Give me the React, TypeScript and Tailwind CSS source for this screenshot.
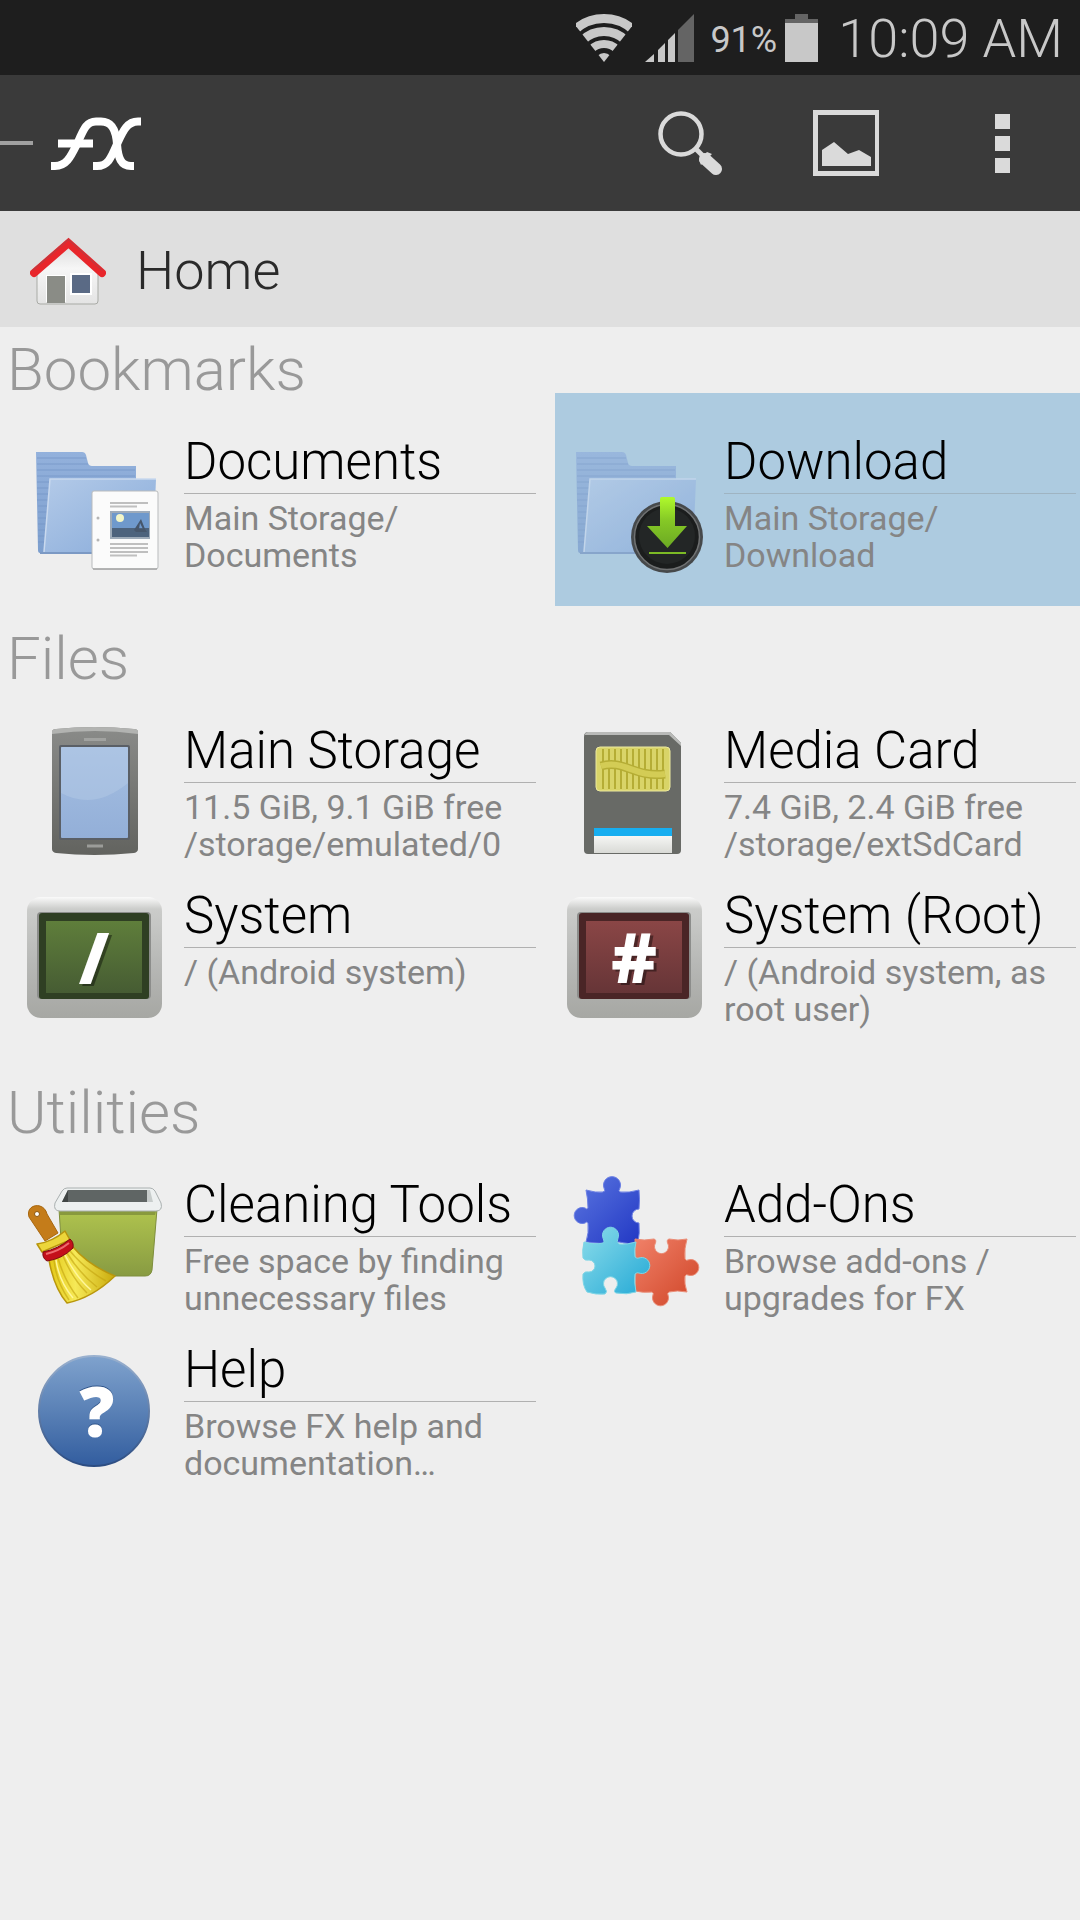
import React from "react";

interface ITile {
    title: string;
    lines: string[];
    icon: React.ReactNode;
    selected?: boolean;
}

interface ISection {
    heading: string;
    tiles: ITile[];
}

const WifiIcon = () => (
    <svg viewBox="0 0 56 48" className="h-12 w-14">
        <clipPath id="wifiFan"><path d="M28 48L-1 11V-2H57V11Z" /></clipPath>
        <g clipPath="url(#wifiFan)" fill="none" stroke="#c8c8c8">
            <circle cx="28" cy="48" r="43.5" strokeWidth="9" />
            <circle cx="28" cy="48" r="30.5" strokeWidth="9" />
            <circle cx="28" cy="48" r="18" strokeWidth="8" />
            <circle cx="28" cy="48" r="9" fill="#c8c8c8" stroke="none" />
        </g>
    </svg>
);

const SignalIcon = () => (
    <svg viewBox="0 0 49 48" className="ml-[13px] h-12 w-[49px]">
        <path d="M0 48L9 40V48ZM13 48V36L20 29V48ZM23 48V26L30 19V48Z" fill="#c8c8c8" />
        <path d="M33 48V16L49 0V48Z" fill="#646464" />
    </svg>
);

const BatteryIcon = () => (
    <svg viewBox="0 0 33 48" className="ml-2 h-12 w-[33px]">
        <path d="M10 0H23V5H33V9H0V5H10Z" fill="#646464" />
        <path d="M0 9H33V48H0Z" fill="#c8c8c8" />
    </svg>
);

const FxLogo = () => (
    <svg viewBox="0 0 90 53" className="ml-[18px] h-[53px] w-[90px]" fill="none" stroke="#fff" strokeWidth="8">
        <path d="M0 49H4C16 49 20 39 27 25C33 11 36 4.500 45 4.500H50C61 4.500 65 13 66 27C67 41 70 49 80 49H83" />
        <path d="M90 4.500H87C76 4.500 72 14 66 27C60 41 57 49 46 49H42" />
        <path d="M7 26.500H42" />
    </svg>
);

const SearchIcon = () => (
    <svg viewBox="0 0 64 64" className="size-16">
        <circle cx="23" cy="23" r="20.500" fill="none" stroke="#dadada" strokeWidth="4.500" />
        <path d="M37 37L45 45" stroke="#dadada" strokeWidth="5" />
        <path d="M47 48L58 58" stroke="#dadada" strokeWidth="12" strokeLinecap="round" />
        <path d="M41 49L49 41L54 43L43 54Z" fill="#dadada" />
    </svg>
);

const PictureIcon = () => (
    <svg viewBox="0 0 66 66" className="size-[66px]" fill="#dadada">
        <path d="M0 0H66V66H0ZM5 5V61H62V5Z" fillRule="evenodd" />
        <path d="M9 40L21 32L35 44L46 40L58 47V56H9Z" />
    </svg>
);

const MoreIcon = () => (
    <svg viewBox="0 0 15 59" className="h-[59px] w-[15px]" fill="#dadada">
        <path d="M0 0H15V15H0ZM0 22H15V37H0ZM0 44H15V59H0Z" />
    </svg>
);

const HomeIcon = () => (
    <svg viewBox="0 0 76 68" className="h-[68px] w-[76px]">
        <defs>
            <linearGradient id="wall" x1="0" y1="0" x2="0" y2="1">
                <stop offset="0" stopColor="#dcdcdc" /><stop offset=".4" stopColor="#f6f6f6" /><stop offset="1" stopColor="#e4e4e4" />
            </linearGradient>
        </defs>
        <path d="M38 8L68 34V64Q68 67 65 67H10Q7 67 7 64V34Z" fill="url(#wall)" stroke="#a9aba6" strokeWidth="1" />
        <rect x="16" y="38" width="20" height="27" fill="#fff" />
        <rect x="17" y="39" width="18" height="27" fill="#8a8c86" />
        <rect x="40" y="36" width="22" height="22" fill="#fff" />
        <rect x="42" y="38" width="18" height="18" fill="#5a6a85" />
        <path d="M4 36L38.500 6L72 36" fill="none" stroke="#e8262b" strokeWidth="8" strokeLinecap="round" />
        <path d="M3 33L38.500 2.500L72 33" fill="none" stroke="#c4373d" strokeWidth="1.500" strokeLinecap="round" />
    </svg>
);

const IconBox = ({ children }: { children: React.ReactNode }) => (
    <svg viewBox="0 0 144 144" className="mt-[37px] ml-[7px] size-36 shrink-0">{children}</svg>
);

const Folder = ({ id }: { id: string }) => (
    <>
        <defs>
            <linearGradient id={id + "Back"} x1="0" y1="0" x2="0" y2="1">
                <stop offset="0" stopColor="#93b1dc" /><stop offset="1" stopColor="#7d9fce" />
            </linearGradient>
            <linearGradient id={id + "Front"} x1="0" y1="0" x2="1" y2="1">
                <stop offset="0" stopColor="#b3cae8" /><stop offset="1" stopColor="#88abda" />
            </linearGradient>
        </defs>
        <path d="M14 22H60Q63 22 64 25L66 33Q67 36 70 36H114V123H18Q16 123 16 120Z" fill={"url(#" + id + "Back)"} />
        <path d="M15 28H64M15 34H66M15 40H113M15 46H113M15 52H27M15 58H27M15 64H27M15 70H26M16 76H26M16 82H25M16 88H25M16 94H25M16 100H24M16 106H24M16 112H23" stroke="#7697c8" strokeWidth="2" opacity=".4" />
        <path d="M28 49H134L131 122H22Z" fill={"url(#" + id + "Front)"} />
        <path d="M22 122L28 49H134" fill="none" stroke="#c9d9ee" strokeWidth="1.500" />
        <path d="M18 123H131" stroke="#7b99c4" strokeWidth="2" />
    </>
);

const DocumentsIcon = () => (
    <IconBox>
        <Folder id="docs" />
        <rect x="70" y="61" width="66" height="78" rx="2" fill="#fbfbfb" stroke="#b9bbbd" strokeWidth="1" />
        <path d="M71 139H135" stroke="#8c8c8c" strokeWidth="1" />
        <path d="M88 73H126M88 76.500H115M88 114H126M88 118H126M88 122H126M88 125.500H115" stroke="#bfbfbf" strokeWidth="2" />
        <rect x="88" y="81" width="40" height="28" fill="#9eabb9" />
        <rect x="90" y="83" width="37" height="24" fill="#6f99cc" />
        <rect x="90" y="98" width="37" height="9" fill="#4d637d" />
        <circle cx="98" cy="88" r="4" fill="#f3f6c8" />
        <path d="M112 100L119 89L123 99L125 102H114ZM118 93L117 99H121Z" fill="#46566b" fillRule="evenodd" />
        <circle cx="76" cy="88" r="1.500" fill="#b5b5b5" />
        <circle cx="76" cy="110" r="1.500" fill="#b5b5b5" />
    </IconBox>
);

const DownloadIcon = () => (
    <IconBox>
        <defs>
            <linearGradient id="arrow" x1="0" y1="0" x2="0" y2="1">
                <stop offset="0" stopColor="#b0fa2c" /><stop offset=".45" stopColor="#86c926" /><stop offset="1" stopColor="#6ba823" />
            </linearGradient>
        </defs>
        <g opacity=".75"><Folder id="down" /></g>
        <circle cx="105" cy="107" r="36" fill="#46494b" />
        <circle cx="105" cy="107" r="32.500" fill="#1b1d1d" stroke="#707273" strokeWidth="1.500" />
        <circle cx="105" cy="106" r="28" fill="#232626" />
        <path d="M98 69Q98 67 100 67H111Q113 67 113 69V96H125L105.500 118L85 96H98Z" fill="url(#arrow)" />
        <path d="M87 123H124" stroke="#7cba25" strokeWidth="2" />
    </IconBox>
);

const PhoneIcon = () => (
    <IconBox>
        <defs>
            <linearGradient id="phoneBody" x1="0" y1="0" x2="0" y2="1">
                <stop offset="0" stopColor="#8a8b89" /><stop offset="1" stopColor="#62635f" />
            </linearGradient>
            <linearGradient id="phoneScreen" x1="0" y1="0" x2="0" y2="1">
                <stop offset="0" stopColor="#a5bfe2" /><stop offset="1" stopColor="#93afd8" />
            </linearGradient>
        </defs>
        <path d="M30 13Q30 10 34 10Q72 6 112 10Q116 10 116 13V130Q116 133 112 134Q72 138 34 134Q30 133 30 130Z" fill="url(#phoneBody)" />
        <path d="M30 15V13Q30 10 34 10Q72 6 112 10Q116 10 116 13V15Q73 9 30 15Z" fill="#b2b3b1" />
        <rect x="37" y="26" width="71" height="95" rx="2" fill="#5a5f66" />
        <rect x="39" y="28" width="67" height="91" rx="1" fill="url(#phoneScreen)" />
        <path d="M39 74Q72 92 106 64V28H39Z" fill="#b4c9e6" opacity=".5" />
        <path d="M62 20.500H84" stroke="#a1a2a0" strokeWidth="3" />
        <path d="M65 127H81" stroke="#9b9c99" strokeWidth="3" />
    </IconBox>
);

const CardIcon = () => (
    <IconBox>
        <defs>
            <linearGradient id="label" x1="0" y1="0" x2="0" y2="1">
                <stop offset="0" stopColor="#f5f6f4" /><stop offset="1" stopColor="#d9dad6" />
            </linearGradient>
        </defs>
        <path d="M22 18Q22 13 26 13H108L119 24V131Q119 135 115 135H26Q22 135 22 131Z" fill="#686a66" />
        <path d="M23 16Q23 13 26 13H108L119 24V27L107 16Z" fill="#b9bab8" />
        <rect x="34" y="28" width="74" height="44" rx="4" fill="#d9d468" stroke="#ece9a0" strokeWidth="1" />
        <path d="M41 30V70M47 30V70M53 30V70M59 30V70M65 30V70M71 30V70M77 30V70M83 30V70M89 30V70M95 30V70M101 30V70" stroke="#b5ad35" strokeWidth="2" />
        <path d="M39 47C62 40 72 59 103 55" fill="none" stroke="#b5ad35" strokeWidth="9" />
        <path d="M39 47C62 40 72 59 103 55" fill="none" stroke="#d3cc55" strokeWidth="6" />
        <rect x="32" y="109" width="78" height="8" fill="#17aef0" />
        <rect x="32" y="117" width="78" height="17" fill="url(#label)" />
    </IconBox>
);

interface IMonitorProps {
    id: string;
    sign: string;
    top: string;
    bottom: string;
    frame: string;
}

const MonitorIcon = ({ id, sign, top, bottom, frame }: IMonitorProps) => (
    <IconBox>
        <defs>
            <linearGradient id={id + "Case"} x1="0" y1="0" x2="0" y2="1">
                <stop offset="0" stopColor="#fafafa" /><stop offset=".1" stopColor="#cbccca" /><stop offset=".5" stopColor="#b9bab8" /><stop offset="1" stopColor="#a6a7a3" />
            </linearGradient>
            <linearGradient id={id + "Screen"} x1="0" y1="0" x2="0" y2="1">
                <stop offset="0" stopColor={top} /><stop offset="1" stopColor={bottom} />
            </linearGradient>
        </defs>
        <rect x="5" y="13" width="135" height="121" rx="14" fill={"url(#" + id + "Case)"} />
        <rect x="15" y="28" width="114" height="87" rx="4" fill="#8c8d8b" />
        <rect x="17" y="29" width="110" height="86" rx="3" fill={frame} />
        <rect x="24" y="37" width="96" height="72" fill={"url(#" + id + "Screen)"} />
        <text x="75" y="101" textAnchor="middle" fontSize="69" fontWeight="800" fill="#000" opacity=".4" className="font-['Open_Sans',sans-serif]" aria-hidden="true">{sign}</text>
        <text x="72" y="99" textAnchor="middle" fontSize="69" fontWeight="800" fill="#fff" className="font-['Open_Sans',sans-serif]">{sign}</text>
    </IconBox>
);

const CleaningIcon = () => (
    <IconBox>
        <defs>
            <linearGradient id="bin" x1="0" y1="0" x2="0" y2="1">
                <stop offset="0" stopColor="#b0c44e" /><stop offset="1" stopColor="#889b42" />
            </linearGradient>
            <linearGradient id="bristles" x1="0" y1="0" x2="1" y2="0">
                <stop offset="0" stopColor="#e3c816" /><stop offset=".4" stopColor="#f6e957" /><stop offset="1" stopColor="#c9aa0c" />
            </linearGradient>
        </defs>
        <path d="M37 36H135L130 97Q129 103 123 103H48Q42 103 41 97Z" fill="url(#bin)" stroke="#7e8e3c" strokeWidth="1" />
        <path d="M38 38H134L133 42H38Z" fill="#6f7e34" opacity=".6" />
        <path d="M45 15H128Q131 15 133 18L139 30Q141 38 134 38H38Q31 38 33 30L40 18Q42 15 45 15Z" fill="#edf0f0" stroke="#aab0b0" strokeWidth="1" />
        <path d="M46 17H125V29H40Z" fill="#5f6564" />
        <path d="M46 17L40 29H46Z" fill="#404544" />
        <path d="M125 17H128L131 29H125Z" fill="#c7cccb" />
        <path d="M7 44C3 31 22 28 25 41L36 60L23 68Z" fill="#c47c1a" stroke="#a8670f" strokeWidth="1" />
        <circle cx="15" cy="41" r="2.500" fill="#fff" stroke="#8b560f" strokeWidth="1" />
        <path d="M15 71Q30 69 43 58L48 67L20 79Z" fill="#ecd63a" stroke="#b8950d" strokeWidth="1.500" strokeLinejoin="round" />
        <path d="M27 87L51 74Q66 92 93 103Q70 125 45 130Q32 115 27 87Z" fill="url(#bristles)" stroke="#b9970d" strokeWidth="1.500" strokeLinejoin="round" />
        <path d="M32 87Q34 108 47 127M36 85Q42 107 56 125M41 83Q50 105 65 120M45 80Q58 101 75 114M48 78Q64 97 84 108" fill="none" stroke="#c3a40f" strokeWidth="1.500" opacity=".6" />
        <path d="M34 87Q37 108 51 125M43 82Q54 104 69 117" fill="none" stroke="#fff69a" strokeWidth="1.500" />
        <path d="M21 79Q36 76 48 66Q52 69 51 75Q40 86 25 88Q20 85 21 79Z" fill="#c4101b" stroke="#7f0b12" strokeWidth="1" />
        <path d="M24 81Q37 78 47 70" fill="none" stroke="#ee6a6e" strokeWidth="2" />
    </IconBox>
);

const PuzzleIcon = () => (
    <IconBox>
        <defs>
            <linearGradient id="pieceBlue" x1="0" y1="0" x2="1" y2="1">
                <stop offset="0" stopColor="#5b76e0" /><stop offset="1" stopColor="#2238c4" />
            </linearGradient>
            <linearGradient id="pieceCyan" x1="0" y1="0" x2="1" y2="1">
                <stop offset="0" stopColor="#8bdcea" /><stop offset="1" stopColor="#24a9d6" />
            </linearGradient>
            <linearGradient id="pieceRed" x1="0" y1="0" x2="1" y2="1">
                <stop offset="0" stopColor="#f08068" /><stop offset="1" stopColor="#cf4426" />
            </linearGradient>
        </defs>
        <path d="M24 17Q34 20 41 19Q44 18 42 15A8.500 8.500 0 1 1 58 15Q56 18 58 19Q67 20 77 17Q78 27 77 36A7 7 0 1 0 77 50Q78 60 76 69Q66 72 57 69Q41 72 24 69Q27 60 26 50Q25 48 23 50A8 8 0 1 1 23 35Q25 37 26 35Q26 26 24 17Z" fill="url(#pieceBlue)" stroke="#6c80e4" strokeWidth="1" />
        <path d="M73 66Q82 68 92 66Q95 67 93 71A7 7 0 1 0 106 71Q104 67 107 66Q116 68 125 66Q122 75 123 86Q124 88 126 87A8 8 0 1 1 126 102Q124 101 123 103Q122 111 125 119Q115 117 107 119Q105 120 106 122A8 8 0 1 1 91 122Q92 120 90 119Q81 120 73 118Q75 92 73 66Z" fill="url(#pieceRed)" stroke="#ea8c76" strokeWidth="1" />
        <path d="M22 69Q33 72 41 70Q43 69 41 65A8 8 0 1 1 56 65Q54 69 57 71Q65 72 74 69Q72 76 73 84Q75 86 77 85A8 8 0 1 1 77 100Q75 99 73 101Q72 110 74 119Q65 122 54 120Q51 119 54 115A7 7 0 1 0 43 115Q46 119 43 121Q34 122 25 119Q20 112 21 101Q23 98 27 99A6 6 0 1 0 27 87Q23 88 21 85Q20 77 22 69Z" fill="url(#pieceCyan)" stroke="#7fd6e6" strokeWidth="1" />
    </IconBox>
);

const HelpIcon = () => (
    <IconBox>
        <defs>
            <linearGradient id="ball" x1="0" y1="0" x2="0" y2="1">
                <stop offset="0" stopColor="#7fa2cd" /><stop offset=".5" stopColor="#5a81b6" /><stop offset="1" stopColor="#325d9f" />
            </linearGradient>
            <linearGradient id="ballEdge" x1="0" y1="0" x2="0" y2="1">
                <stop offset="0" stopColor="#9ab1cf" /><stop offset="1" stopColor="#2b4c82" />
            </linearGradient>
        </defs>
        <circle cx="72" cy="73" r="55" fill="url(#ball)" stroke="url(#ballEdge)" strokeWidth="2" />
        <text x="75" y="98" textAnchor="middle" fontSize="69" fontWeight="800" fill="#2f5489" className="font-['Open_Sans',sans-serif]" aria-hidden="true">?</text>
        <text x="75" y="99" textAnchor="middle" fontSize="69" fontWeight="800" fill="#fff" className="font-['Open_Sans',sans-serif]">?</text>
    </IconBox>
);

const sections: ISection[] = [
    {
        heading: "Bookmarks",
        tiles: [
            { title: "Documents", lines: ["Main Storage/", "Documents"], icon: <DocumentsIcon /> },
            { title: "Download", lines: ["Main Storage/", "Download"], icon: <DownloadIcon />, selected: true }
        ]
    },
    {
        heading: "Files",
        tiles: [
            { title: "Main Storage", lines: ["11.5 GiB, 9.1 GiB free", "/storage/emulated/0"], icon: <PhoneIcon /> },
            { title: "Media Card", lines: ["7.4 GiB, 2.4 GiB free", "/storage/extSdCard"], icon: <CardIcon /> },
            { title: "System", lines: ["/ (Android system)"], icon: <MonitorIcon id="sys" sign="/" top="#5f7e3b" bottom="#465c33" frame="#2f3f23" /> },
            { title: "System (Root)", lines: ["/ (Android system, as", "root user)"], icon: <MonitorIcon id="root" sign="#" top="#8a4646" bottom="#663537" frame="#4a2526" /> }
        ]
    },
    {
        heading: "Utilities",
        tiles: [
            { title: "Cleaning Tools", lines: ["Free space by finding", "unnecessary files"], icon: <CleaningIcon /> },
            { title: "Add-Ons", lines: ["Browse add-ons /", "upgrades for FX"], icon: <PuzzleIcon /> },
            { title: "Help", lines: ["Browse FX help and", "documentation…"], icon: <HelpIcon /> }
        ]
    }
];

const Tile = ({ title, lines, icon, selected }: ITile) => (
    <button type="button" className={"ml-[15px] flex min-h-[213px] items-start gap-[18px] pr-1 text-left " + (selected ? "bg-[#adcbe0]" : "")}>
        {icon}
        <span className="flex min-w-0 flex-1 flex-col pt-[38px]">
            <span className={"border-b text-[51px] leading-[62px] font-light whitespace-nowrap text-black " + (selected ? "border-[#9fb4c2]" : "border-[#b0b0b0]")}>{title}</span>
            <span className="flex flex-col pt-1.5 text-[34px] leading-[37px] text-[#858585]">
                {lines.map((line: string) => <span key={line} className="whitespace-nowrap">{line}</span>)}
            </span>
        </span>
    </button>
);

class App extends React.Component
{
    render()
    {
        return (
            <div className="min-h-screen bg-[#eeeeee] font-[Roboto,sans-serif]">
                <div className="flex h-[75px] items-center justify-end bg-[#1e1e1e] pr-[17px] text-[#c8c8c8]">
                    <WifiIcon />
                    <SignalIcon />
                    <span className="ml-4 pt-1 text-[36px] leading-[48px]">91%</span>
                    <BatteryIcon />
                    <span className="ml-5 pt-0.5 text-[54px] leading-[75px] font-light">10:09 AM</span>
                </div>
                <header className="flex h-[136px] items-center bg-[#3a3a3a]">
                    <div className="h-1 w-[33px] bg-[#a0a0a0]"></div>
                    <FxLogo />
                    <div className="ml-auto flex">
                        <button type="button" aria-label="Search" className="flex h-[136px] w-[156px] items-center justify-center"><SearchIcon /></button>
                        <button type="button" aria-label="Pictures" className="flex h-[136px] w-[156px] items-center justify-center"><PictureIcon /></button>
                        <button type="button" aria-label="More options" className="flex h-[136px] w-[156px] items-center justify-center"><MoreIcon /></button>
                    </div>
                </header>
                <nav className="flex h-[116px] items-center bg-[#dfdfdf] pt-1 pl-[30px]">
                    <a href="#home" className="flex items-center gap-[30px] text-[54px] leading-[64px] font-light text-[#2a2a2a]">
                        <HomeIcon />
                        Home
                    </a>
                </nav>
                <main>
                    {sections.map((section: ISection) => (
                        <section key={section.heading} className="pb-[58px]">
                            <h2 className="h-[66px] pt-2.5 pl-[7px] text-[60px] leading-[66px] font-light text-[#999999]">{section.heading}</h2>
                            <div className="grid auto-rows-[165px] grid-cols-2">
                                {section.tiles.map((tile: ITile) => <Tile key={tile.title} {...tile} />)}
                            </div>
                        </section>
                    ))}
                </main>
            </div>
        );
    }
}

export default App;
